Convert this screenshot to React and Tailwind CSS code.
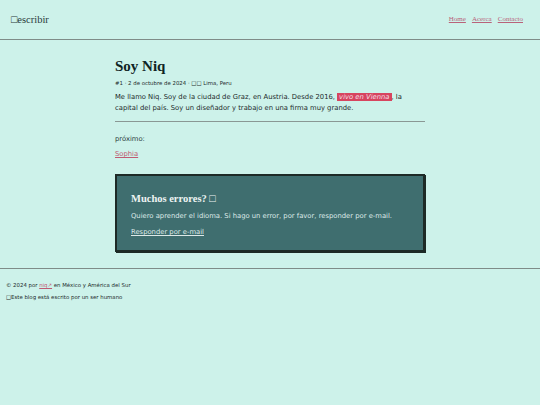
import React from 'react';

export default function App() {
  return (
    <div className="min-h-[405px] w-[540px] bg-[#cdf2ea] text-[#1c2b2b] font-['DejaVu_Sans',sans-serif]">
      {/* Header */}
      <header className="flex h-[40px] items-center justify-between border-b border-[#7f8c88] px-[11px]">
        <a className="font-['Liberation_Serif',serif] text-[10.5px] text-[#2a3a3a]">□escribir</a>
        <nav className="flex gap-[6px] pr-[6px] font-['Liberation_Serif',serif] text-[7px] text-[#b9627a]">
          <a className="underline">Home</a>
          <a className="underline">Acerca</a>
          <a className="underline">Contacto</a>
        </nav>
      </header>

      {/* Main */}
      <main className="mx-auto w-[310px] pt-[16px] pb-[16px]">
        <h1 className="font-['Liberation_Serif',serif] text-[15px] font-bold leading-[20px] text-[#0f2424]">Soy Niq</h1>
        <p className="mt-[3px] text-[5.4px] leading-[8px]">#1 · 2 de octubre de 2024 · □□ Lima, Peru</p>
        <p className="mt-[5px] text-[6.8px] leading-[11px]">
          Me llamo Niq. Soy de la ciudad de Graz, en Austria. Desde 2016,{' '}
          <span className="bg-[#d7455f] px-[2px] italic text-[#f3dfe3]">vivo en Vienna</span>, la capital del país. Soy un diseñador y
          trabajo en una firma muy grande.
        </p>
        <hr className="mt-[7px] border-[#8a9894]" />
        <p className="mt-[12px] text-[6.8px] leading-[10px] text-[#2c3c3c]">próximo:</p>
        <a className="mt-[5px] block text-[6.8px] leading-[10px] text-[#c05a72] underline">Sophia</a>

        <div className="mt-[15px] h-[78px] border-2 border-[#1d2a26] bg-[#3f6e6f] px-[14px] pt-[15px] text-[#dde9e8] shadow-[1px_1px_0_#1d2a26]">
          <h2 className="font-['Liberation_Serif',serif] text-[10.5px] font-bold leading-[16px] text-[#eef4f3]">Muchos errores? □</h2>
          <p className="mt-[4px] text-[6.8px] leading-[10px]">Quiero aprender el idioma. Si hago un error, por favor, responder por e-mail.</p>
          <a className="mt-[6px] block text-[6.8px] leading-[10px] underline">Responder por e-mail</a>
        </div>
      </main>

      {/* Footer */}
      <footer className="border-t border-[#7f8c88] px-[6px] pt-[10px] text-[5.4px] leading-[12px]">
        <p>
          © 2024 por <a className="text-[#c05a72] underline">niq↗</a> en México y América del Sur
        </p>
        <p>□Este blog está escrito por un ser humano</p>
      </footer>
    </div>
  );
}
